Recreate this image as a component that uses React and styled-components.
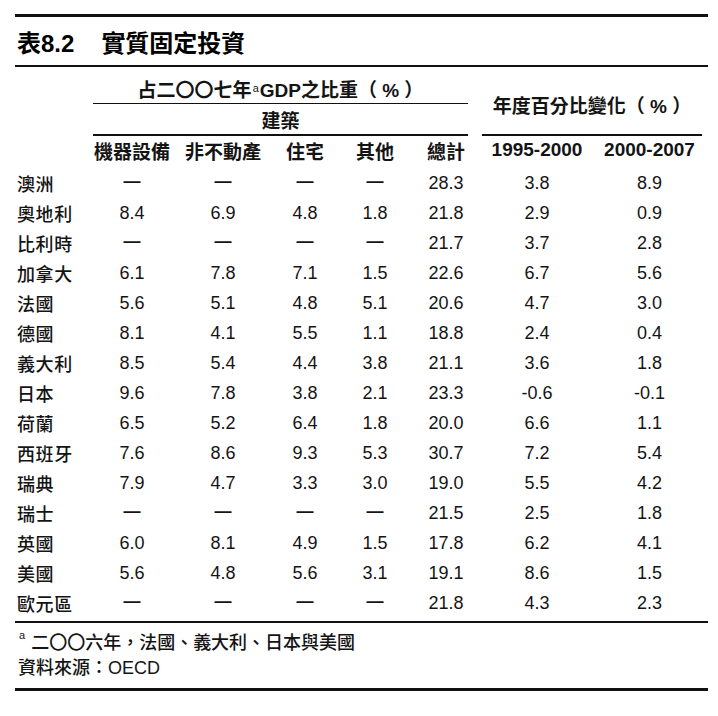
import React from 'react';
import styled, { createGlobalStyle } from 'styled-components';

const GlobalStyle = createGlobalStyle`
    body {
        margin: 0;
        background: #fff;
        color: #141414;
        font-family: "Liberation Sans", "Noto Sans CJK TC", sans-serif;
        text-spacing-trim: space-all;
    }
`;

const rows = [
    ['澳洲', '—', '—', '—', '—', '28.3', '3.8', '8.9'],
    ['奧地利', '8.4', '6.9', '4.8', '1.8', '21.8', '2.9', '0.9'],
    ['比利時', '—', '—', '—', '—', '21.7', '3.7', '2.8'],
    ['加拿大', '6.1', '7.8', '7.1', '1.5', '22.6', '6.7', '5.6'],
    ['法國', '5.6', '5.1', '4.8', '5.1', '20.6', '4.7', '3.0'],
    ['德國', '8.1', '4.1', '5.5', '1.1', '18.8', '2.4', '0.4'],
    ['義大利', '8.5', '5.4', '4.4', '3.8', '21.1', '3.6', '1.8'],
    ['日本', '9.6', '7.8', '3.8', '2.1', '23.3', '-0.6', '-0.1'],
    ['荷蘭', '6.5', '5.2', '6.4', '1.8', '20.0', '6.6', '1.1'],
    ['西班牙', '7.6', '8.6', '9.3', '5.3', '30.7', '7.2', '5.4'],
    ['瑞典', '7.9', '4.7', '3.3', '3.0', '19.0', '5.5', '4.2'],
    ['瑞士', '—', '—', '—', '—', '21.5', '2.5', '1.8'],
    ['英國', '6.0', '8.1', '4.9', '1.5', '17.8', '6.2', '4.1'],
    ['美國', '5.6', '4.8', '5.6', '3.1', '19.1', '8.6', '1.5'],
    ['歐元區', '—', '—', '—', '—', '21.8', '4.3', '2.3'],
];

const columns = ['機器設備', '非不動產', '住宅', '其他', '總計', '1995-2000', '2000-2007'];

const App = () => {
    return (
        <Page>
            <GlobalStyle />
            <Rule $size={3} />
            <TitleRow>
                <span>表8.2</span>
                <span>實質固定投資</span>
            </TitleRow>
            <Rule $size={2} />
            <Grid>
                <Spacer />
                <GroupHead $row="1" $line={1.5} $pad={6}>
                    占二〇〇七年<Sup>a</Sup>GDP之比重（ % ）
                </GroupHead>
                <GroupHead $row="2" $line={2} $pad={0}>建築</GroupHead>
                <RightHead>年度百分比變化（ % ）</RightHead>
                <ColHead />
                {columns.map((c) => (
                    <ColHead key={c}>{c}</ColHead>
                ))}
                {rows.map((r) =>
                    r.map((v, i) =>
                        i === 0 ? (
                            <Label key={r[0] + i}>{v}</Label>
                        ) : (
                            <Cell key={r[0] + i} $dash={v === '—'}>{v}</Cell>
                        )
                    )
                )}
            </Grid>
            <Rule $size={2} $gap={3} />
            <Notes>
                <NoteLine><Sup>a</Sup> 二〇〇六年，法國、義大利、日本與美國</NoteLine>
                <NoteLine>資料來源：OECD</NoteLine>
            </Notes>
            <Rule $size={3} />
        </Page>
    );
};

export default App;

const Page = styled.div`
    width: 693px;
    padding: 14px 10px 0 15px;
`;

const Rule = styled.div`
    height: ${({ $size }) => $size}px;
    margin-top: ${({ $gap }) => $gap || 0}px;
    background: #111;
`;

const TitleRow = styled.div`
    height: 48px;
    display: flex;
    align-items: center;
    gap: 27px;
    padding-left: 2px;
    font-size: 24px;
    font-weight: 700;
    color: #000;
`;

const Grid = styled.div`
    display: grid;
    grid-template-columns: 78px 78px 104px 60px 80px 62px 120px 105px;
    grid-template-rows: 37px 32px 32px repeat(15, 30px);
`;

const Spacer = styled.div`
    grid-row: 1 / 3;
    grid-column: 1;
`;

const GroupHead = styled.div`
    grid-row: ${({ $row }) => $row};
    grid-column: 2 / 7;
    margin-right: 9px;
    padding-top: ${({ $pad }) => $pad}px;
    border-bottom: ${({ $line }) => $line}px solid #111;
    display: flex;
    align-items: center;
    justify-content: center;
    font-size: 19px;
    font-weight: 700;
    white-space: pre;
`;

const RightHead = styled.div`
    grid-row: 1 / 3;
    grid-column: 7 / 9;
    margin-left: 5px;
    padding-top: 8px;
    border-bottom: 2px solid #111;
    display: flex;
    align-items: center;
    justify-content: center;
    font-size: 19px;
    font-weight: 700;
    white-space: pre;
`;

const ColHead = styled.div`
    display: flex;
    align-items: center;
    justify-content: center;
    padding-bottom: 4px;
    font-size: 19px;
    font-weight: 700;
    white-space: nowrap;
`;

const Label = styled.div`
    display: flex;
    align-items: center;
    padding-left: 2px;
    font-size: 18px;
    font-weight: 500;
    letter-spacing: 0.6px;
    white-space: nowrap;
`;

const Cell = styled.div`
    display: flex;
    align-items: center;
    justify-content: center;
    font-size: ${({ $dash }) => ($dash ? '17px' : '18px')};
    font-weight: ${({ $dash }) => ($dash ? 700 : 400)};
    padding-bottom: ${({ $dash }) => ($dash ? '3px' : '0')};
`;

const Notes = styled.div`
    padding: 8px 0 7px 3px;
`;

const NoteLine = styled.div`
    line-height: 25px;
    font-size: 18px;
    font-weight: 500;
`;

const Sup = styled.sup`
    font-size: 11px;
    font-weight: 400;
    vertical-align: 10px;
    line-height: 0;
    margin: 0 1px;
`;
